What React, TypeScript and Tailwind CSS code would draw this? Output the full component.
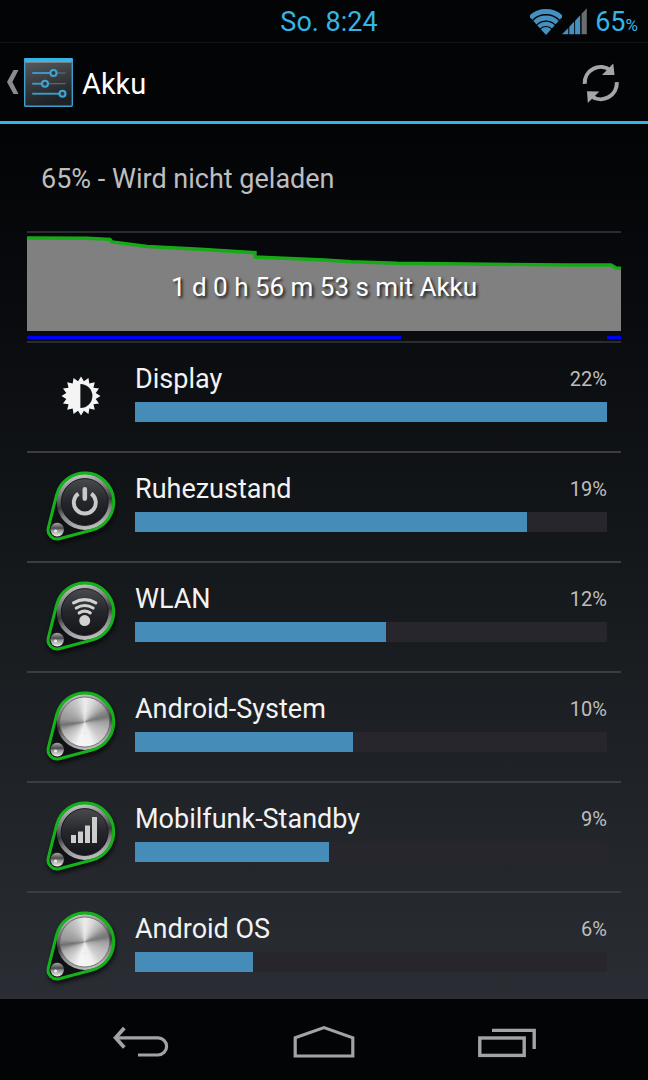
import type { ReactNode } from "react";

type IconKind = "display" | "power" | "wifi" | "metal" | "signal";

interface Usage {
  name: string;
  percent: number;
  fill: number;
  icon: IconKind;
}

const usages: Usage[] = [
  { name: "Display", percent: 22, fill: 100, icon: "display" },
  { name: "Ruhezustand", percent: 19, fill: 83.1, icon: "power" },
  { name: "WLAN", percent: 12, fill: 53.1, icon: "wifi" },
  { name: "Android-System", percent: 10, fill: 46.1, icon: "metal" },
  { name: "Mobilfunk-Standby", percent: 9, fill: 41.1, icon: "signal" },
  { name: "Android OS", percent: 6, fill: 25, icon: "metal" },
];

function WifiStatus() {
  return (
    <svg className="h-[26px] w-8" viewBox="0 0 32 26" aria-hidden="true">
      <defs>
        <clipPath id="fan">
          <path d="M16 26 L-3 5 L-3 -2 H35 V5 Z" />
        </clipPath>
      </defs>
      <g clipPath="url(#fan)" fill="none" stroke="#4690bf">
        <circle cx="16" cy="25" r="22.4" strokeWidth="5" />
        <circle cx="16" cy="25" r="16" strokeWidth="4.8" />
        <circle cx="16" cy="25" r="10.2" strokeWidth="4.2" />
        <circle cx="16" cy="25" r="3.5" strokeWidth="7" />
      </g>
    </svg>
  );
}

function SignalStatus() {
  return (
    <svg className="h-[27px] w-[25px]" viewBox="0 0 25 27" aria-hidden="true">
      <path d="M0 26.3 L6.3 20 V26.3 Z M7.3 18.8 L12.2 13.6 V26.3 H7.3 Z M13.1 12.7 L18.2 7.3 V26.3 H13.1 Z" fill="#4690bf" />
      <path d="M19.6 5.8 L24.8 0.3 V26.3 H19.6 Z" fill="#6a6c6d" />
    </svg>
  );
}

function SettingsIcon() {
  const sliders = [
    { y: 15, x: 29.5 },
    { y: 25.7, x: 21 },
    { y: 35.7, x: 38.5 },
  ];
  return (
    <svg className="size-[49px]" viewBox="0 0 49 49" aria-hidden="true">
      <defs>
        <linearGradient id="tile" x1="0" y1="0" x2="0.3" y2="1">
          <stop offset="0" stopColor="#5b5f62" />
          <stop offset="0.5" stopColor="#3c3f42" />
          <stop offset="1" stopColor="#1e2125" />
        </linearGradient>
      </defs>
      <rect x="0.7" y="0.7" width="47.6" height="47.6" rx="1" fill="url(#tile)" stroke="#3c9fce" strokeWidth="1.4" />
      <rect x="0.2" y="0" width="48.6" height="3.2" rx="1" fill="#35b5e5" />
      <rect x="1.4" y="3.2" width="46.2" height="1.3" fill="#a5a9ab" />
      {sliders.map((s) => (
        <g key={s.y}>
          <path d={`M8.3 ${s.y} H41.7`} stroke="#6a7074" strokeWidth="1" />
          <path d={`M8.3 ${s.y} H${s.x}`} stroke="#3c9ac8" strokeWidth="1.9" />
          <circle cx={s.x} cy={s.y} r="3" fill="#33383c" stroke="#41a3d2" strokeWidth="2.1" />
        </g>
      ))}
    </svg>
  );
}

function RefreshIcon() {
  return (
    <svg className="h-10 w-[38px]" viewBox="0 0 38 40" aria-hidden="true">
      <g fill="none" stroke="#a6a6a6" strokeWidth="4">
        <path d="M2.7 20.8 A16 16 0 0 1 28.5 7.4" />
        <path d="M34.8 19.2 A16 16 0 0 1 9 32.8" />
      </g>
      <path d="M31.3 0.6 L32.5 12 H20 Z M5 28.3 L17.4 28.5 L5.8 40 Z" fill="#a6a6a6" />
    </svg>
  );
}

function DisplayIcon() {
  const points = Array.from({ length: 32 }, (_, i) => {
    const r = i % 2 === 0 ? 19.5 : 15;
    const a = (i * Math.PI) / 16;
    return `${(54 + r * Math.sin(a)).toFixed(2)},${(54 - r * Math.cos(a)).toFixed(2)}`;
  }).join(" ");
  return (
    <svg className="h-[108px] w-[108px]" viewBox="0 1 108 108" aria-hidden="true">
      <polygon points={points} fill="#f4f4f4" />
      <path d="M53.4 42 A12 12 0 0 1 53.4 66 Z" fill="#121316" />
    </svg>
  );
}

const metalStops: [number, number][] = [
  [0, 238],
  [22, 215],
  [45, 178],
  [66, 130],
  [76, 118],
  [90, 160],
  [110, 185],
  [135, 205],
  [160, 242],
  [195, 246],
  [220, 210],
  [245, 175],
  [262, 112],
  [276, 150],
  [305, 172],
  [335, 200],
  [360, 238],
];

function metalShade(angle: number) {
  const next = metalStops.findIndex(([a]) => a > angle);
  const [a0, v0] = metalStops[next - 1];
  const [a1, v1] = metalStops[next];
  const v = Math.round(v0 + ((v1 - v0) * (angle - a0)) / (a1 - a0));
  return `rgb(${v},${v},${v})`;
}

function MetalDisc() {
  const step = 5;
  const at = (deg: number) => {
    const a = (deg * Math.PI) / 180;
    return `${(57.7 + 25 * Math.sin(a)).toFixed(2)} ${(50 - 25 * Math.cos(a)).toFixed(2)}`;
  };
  return (
    <g>
      <circle cx="57.7" cy="50" r="25" fill="#b4b4b4" />
      {Array.from({ length: 72 }, (_, i) => (
        <path
          key={i}
          d={`M57.7 50 L${at(i * step)} A25 25 0 0 1 ${at(i * step + step + 2)} Z`}
          fill={metalShade(i * step + 2)}
        />
      ))}
      <circle cx="57.7" cy="50" r="25" fill="none" stroke="#5a5a5c" strokeWidth="0.8" />
    </g>
  );
}

const glyphs: Record<"power" | "wifi" | "signal", ReactNode> = {
  power: (
    <g fill="none" stroke="#c9c9c9">
      <path d="M51.4 41.6 A11 11 0 1 0 64.2 41.6" strokeWidth="3.9" />
      <path d="M57.8 37.4 V46.6" strokeWidth="4.6" strokeLinecap="round" />
    </g>
  ),
  wifi: (
    <g fill="none" stroke="#d2d2d2" strokeWidth="3.2" strokeLinecap="round">
      <path d="M46.6 40.8 Q57.7 34.6 68.8 40.8" />
      <path d="M49.3 46 Q57.7 41 66.1 46" />
      <path d="M52.2 50.8 Q57.7 47.4 63.2 50.8" />
      <circle cx="57.7" cy="58.6" r="5.5" fill="#d2d2d2" stroke="none" />
    </g>
  ),
  signal: (
    <path d="M44 53 h5 v8 h-5 Z M51 49.5 h5 v11.5 h-5 Z M58 43.5 h5 v17.5 h-5 Z M65 35 h5 v26 h-5 Z" fill="#cdcdcd" />
  ),
};

function KnobIcon({ kind }: { kind: "power" | "wifi" | "metal" | "signal" }) {
  const outline = "M29.6 42.9 A29 29 0 1 1 65.1 78 L32.3 86.7 A9 9 0 0 1 21.3 75.8 Z";
  const id = (part: string) => `${kind}-${part}`;
  return (
    <svg className="h-[108px] w-[108px]" viewBox="0 1 108 108" aria-hidden="true">
      <defs>
        <linearGradient id={id("rim")} x1="0.4" y1="0" x2="0.6" y2="1">
          <stop offset="0" stopColor="#c4c4c6" />
          <stop offset="0.3" stopColor="#7b7c7e" />
          <stop offset="0.52" stopColor="#37383a" />
          <stop offset="0.68" stopColor="#808183" />
          <stop offset="1" stopColor="#c4c4c6" />
        </linearGradient>
        <linearGradient id={id("face")} x1="0" y1="0" x2="0" y2="1">
          <stop offset="0" stopColor="#4a4b4f" />
          <stop offset="0.5" stopColor="#25262b" />
          <stop offset="1" stopColor="#15161a" />
        </linearGradient>
        <linearGradient id={id("bead")} x1="0" y1="0" x2="0" y2="1">
          <stop offset="0" stopColor="#a8a8a8" />
          <stop offset="0.4" stopColor="#4a4a4c" />
          <stop offset="0.55" stopColor="#909090" />
          <stop offset="1" stopColor="#f2f2f2" />
        </linearGradient>
        <filter id={id("shadow")} x="-20%" y="-20%" width="140%" height="150%">
          <feGaussianBlur stdDeviation="2.2" />
        </filter>
      </defs>
      <path d={outline} transform="translate(1 3)" fill="#000" stroke="#000" strokeWidth="3" opacity="0.7" filter={`url(#${id("shadow")})`} />
      <path d={outline} fill="#101114" />
      <circle cx="57.7" cy="50" r="28" fill={`url(#${id("rim")})`} />
      <path d={outline} fill="none" stroke="#14b31a" strokeWidth="3" />
      {kind === "metal" ? (
        <MetalDisc />
      ) : (
        <>
          <circle cx="57.7" cy="50" r="23.4" fill={`url(#${id("face")})`} stroke="#17181a" strokeWidth="1" />
          {glyphs[kind]}
        </>
      )}
      <circle cx="30.2" cy="77.6" r="6.8" fill={`url(#${id("bead")})`} />
      <circle cx="28.6" cy="79" r="1.6" fill="#fff" opacity="0.8" />
    </svg>
  );
}

function UsageRow({ usage }: { usage: Usage }) {
  return (
    <li className="border-b-2 border-[#3b3d40] last:border-b-0">
      <button type="button" className="flex w-full text-left">
        <span className="-mb-2 w-[108px] shrink-0">
          {usage.icon === "display" ? <DisplayIcon /> : <KnobIcon kind={usage.icon} />}
        </span>
        <span className="flex min-w-0 grow flex-col pt-5 pr-[14px] pb-[29px]">
          <span className="flex h-8 items-start justify-between leading-8">
            <span className="text-[27px] text-[#f3f3f3]">{usage.name}</span>
            <span className="text-[20px] text-[#bebebe]">{usage.percent}%</span>
          </span>
          <span className="mt-[7px] block h-5 bg-[#28262d]">
            <span className="block h-full bg-[#458cb8]" style={{ width: `${usage.fill}%` }} />
          </span>
        </span>
      </button>
    </li>
  );
}

function HistoryChart() {
  const line =
    "0,5 60,5.3 83,6.3 85,9 120,13.5 173,16.3 228,19.7 228,24 297,27 324,28.7 370,30.3 540,32 584,32 589,35 594,35.3";
  return (
    <button type="button" className="block w-full border-y-2 border-[#2b2c30]">
      <span className="grid">
        <svg className="col-start-1 row-start-1 h-[98px] w-full" viewBox="0 0 594 98" preserveAspectRatio="none" aria-hidden="true">
          <polygon points={`${line} 594,98 0,98`} fill="#808080" />
          <polyline points={line} fill="none" stroke="#16ab16" strokeWidth="3.4" />
        </svg>
        <span className="col-start-1 row-start-1 self-center pt-[10px] text-[26px] leading-8 text-white [text-shadow:2px_2px_3px_#1c1c1c]">
          1 d 0 h 56 m 53 s mit Akku
        </span>
      </span>
      <span className="mt-[5px] mb-[2px] flex h-[3px] justify-between">
        <span className="w-[63%] bg-[#0000fe]" />
        <span className="w-[14px] bg-[#0000fe]" />
      </span>
    </button>
  );
}

export default function App() {
  return (
    <div className="flex min-h-screen flex-col bg-[#030406] font-[Roboto,sans-serif]">
      <div className="grid h-[43px] grid-cols-[1fr_auto_1fr] items-center border-b border-[#111214] pr-[10px] pl-5 text-[27px] leading-8 text-[#35b5e5]">
        <span />
        <span className="pt-px">So. 8:24</span>
        <span className="flex items-center justify-end pt-px">
          <WifiStatus />
          <SignalStatus />
          <span className="ml-2">
            65<span className="text-[17px] leading-none">%</span>
          </span>
        </span>
      </div>

      <header className="flex h-[81px] items-center justify-between border-b-3 border-[#35b5e5] pr-7 pl-[7px]">
        <button type="button" className="flex items-center" aria-label="Zurück">
          <svg className="h-6 w-3" viewBox="0 0 12 24" aria-hidden="true">
            <path d="M6.5 0 H11.5 L5.4 12 L11.5 24 H6.5 L0 12 Z" fill="#8c8c8c" />
          </svg>
          <span className="ml-[5px]">
            <SettingsIcon />
          </span>
        </button>
        <h1 className="mr-auto ml-[9px] pt-1 text-[29px] leading-8 text-white">Akku</h1>
        <button type="button" className="pt-0.5" aria-label="Aktualisieren">
          <RefreshIcon />
        </button>
      </header>

      <main className="grow bg-linear-to-b from-[#030406] via-[#15181b] to-[#2a2e34] px-[27px]">
        <p className="px-[14px] pt-[39px] pb-9 text-[27px] leading-8 text-[#bebebe]">65% - Wird nicht geladen</p>
        <HistoryChart />
        <ul className="-mb-0.5">
          {usages.map((usage) => (
            <UsageRow key={usage.name} usage={usage} />
          ))}
        </ul>
      </main>

      <nav className="grid h-[81px] grid-cols-3 px-[50px]">
        <button type="button" className="grid place-items-center pt-1" aria-label="Zurück">
          <svg className="h-[34px] w-14" viewBox="0 0 56 34" fill="none" stroke="#a3a3a3" strokeWidth="3.2" aria-hidden="true">
            <path d="M3 12.8 H45 A8.3 8.3 0 0 1 45 30 H25" />
            <path d="M11.3 3 L2.6 12.8 L11.3 22.6" strokeWidth="3.8" />
          </svg>
        </button>
        <button type="button" className="grid place-items-center pt-1" aria-label="Startbildschirm">
          <svg className="h-[34px] w-[62px]" viewBox="0 0 62 34" fill="none" stroke="#a3a3a3" strokeWidth="3.2" aria-hidden="true">
            <path d="M2.2 12.8 L31 2.6 L59.8 12.8 V31 H2.2 Z" />
          </svg>
        </button>
        <button type="button" className="grid place-items-center pt-1" aria-label="Letzte Apps">
          <svg className="h-[34px] w-[58px]" viewBox="0 0 58 34" fill="none" stroke="#a3a3a3" strokeWidth="3.4" aria-hidden="true">
            <rect x="1.8" y="13" width="44.4" height="17.4" />
            <path d="M14 5.4 H56.2 V24" />
          </svg>
        </button>
      </nav>
    </div>
  );
}
